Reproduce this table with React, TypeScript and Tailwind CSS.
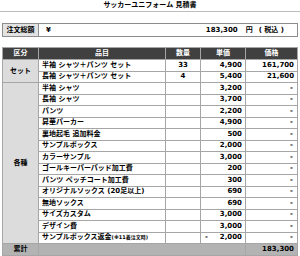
const rows = [
  { name: '半袖 シャツ', price: '3,200' },
  { name: '長袖 シャツ', price: '3,700' },
  { name: 'パンツ', price: '2,200' },
  { name: '昇華パーカー', price: '4,900' },
  { name: '裏地起毛 追加料金', price: '500' },
  { name: 'サンプルボックス', price: '2,000' },
  { name: 'カラーサンプル', price: '3,000' },
  { name: 'ゴールキーパーパッド加工費', price: '200' },
  { name: 'パンツ ペッチコート加工費', price: '300' },
  { name: 'オリジナルソックス (20足以上)', price: '690' },
  { name: '無地ソックス', price: '690' },
  { name: 'サイズカスタム', price: '3,000' },
  { name: 'デザイン費', price: '3,000' },
]

const cell = 'border border-[#a6a6a6] px-[3px] leading-none'
const rowH = 'h-[11.5px]'

export default function App() {
  return (
    <div
      className="w-[300px] h-[256px] bg-white text-black font-bold text-[7px] px-[2px] pt-[2px]"
      style={{ fontFamily: '"DejaVu Sans", "Noto Sans CJK JP", sans-serif' }}
    >
      <div className="text-center leading-[7px] pb-[2px] border-b border-[#bdbdbd] -mx-[2px]">
        サッカーユニフォーム 見積書
      </div>

      <div className="mt-[11px] flex h-[14px] border border-[#8c8c8c]">
        <div className="w-[36px] bg-[#e3e3e3] border-r border-[#8c8c8c] flex items-center justify-center">
          注文総額
        </div>
        <div className="flex-1 flex items-center px-[7px]">
          <span>¥</span>
          <span className="ml-auto mr-[6px]">
            183,300
            <span className="ml-[8px]">円</span>
            <span className="ml-[6px]">( 税込 )</span>
          </span>
        </div>
      </div>

      <table className="mt-[10px] w-[295px] border-collapse table-fixed">
        <colgroup>
          <col className="w-[36px]" />
          <col className="w-[127px]" />
          <col className="w-[35px]" />
          <col className="w-[45px]" />
          <col className="w-[52px]" />
        </colgroup>
        <thead>
          <tr className="h-[12px] bg-[#404040] text-white">
            <th className={cell + ' border-[#404040] font-bold'}>区分</th>
            <th className={cell + ' border-[#404040] border-l-[#7a7a7a] font-bold'}>品目</th>
            <th className={cell + ' border-[#404040] border-l-[#7a7a7a] font-bold'}>数量</th>
            <th className={cell + ' border-[#404040] border-l-[#7a7a7a] font-bold'}>単価</th>
            <th className={cell + ' border-[#404040] border-l-[#7a7a7a] font-bold'}>価格</th>
          </tr>
        </thead>
        <tbody>
          <tr className={rowH}>
            <td rowSpan={2} className={cell + ' bg-[#dcdcdc] text-center'}>セット</td>
            <td className={cell}>半袖 シャツ＋パンツ セット</td>
            <td className={cell + ' text-center'}>33</td>
            <td className={cell + ' text-right'}>4,900</td>
            <td className={cell + ' text-right'}>161,700</td>
          </tr>
          <tr className={rowH}>
            <td className={cell}>長袖 シャツ＋パンツ セット</td>
            <td className={cell + ' text-center'}>4</td>
            <td className={cell + ' text-right'}>5,400</td>
            <td className={cell + ' text-right'}>21,600</td>
          </tr>
          {rows.map((r, i) => (
            <tr key={r.name} className={rowH}>
              {i === 0 && (
                <td rowSpan={rows.length + 1} className={cell + ' bg-[#dcdcdc] text-center'}>
                  各種
                </td>
              )}
              <td className={cell}>{r.name}</td>
              <td className={cell}></td>
              <td className={cell + ' text-right'}>{r.price}</td>
              <td className={cell + ' text-right pr-[4px]'}>-</td>
            </tr>
          ))}
          <tr className={rowH}>
            <td className={cell}>
              サンプルボックス返金<span className="text-[5px]">(※11着注文時)</span>
            </td>
            <td className={cell}></td>
            <td className={cell}>
              <div className="flex justify-between">
                <span className="pl-[1px]">-</span>
                <span>2,000</span>
              </div>
            </td>
            <td className={cell + ' text-right pr-[4px]'}>-</td>
          </tr>
          <tr className={rowH + ' bg-[#b3b3b3]'}>
            <td className={cell + ' text-center'}>累計</td>
            <td colSpan={3} className={cell}></td>
            <td className={cell + ' text-right'}>183,300</td>
          </tr>
        </tbody>
      </table>
    </div>
  )
}
